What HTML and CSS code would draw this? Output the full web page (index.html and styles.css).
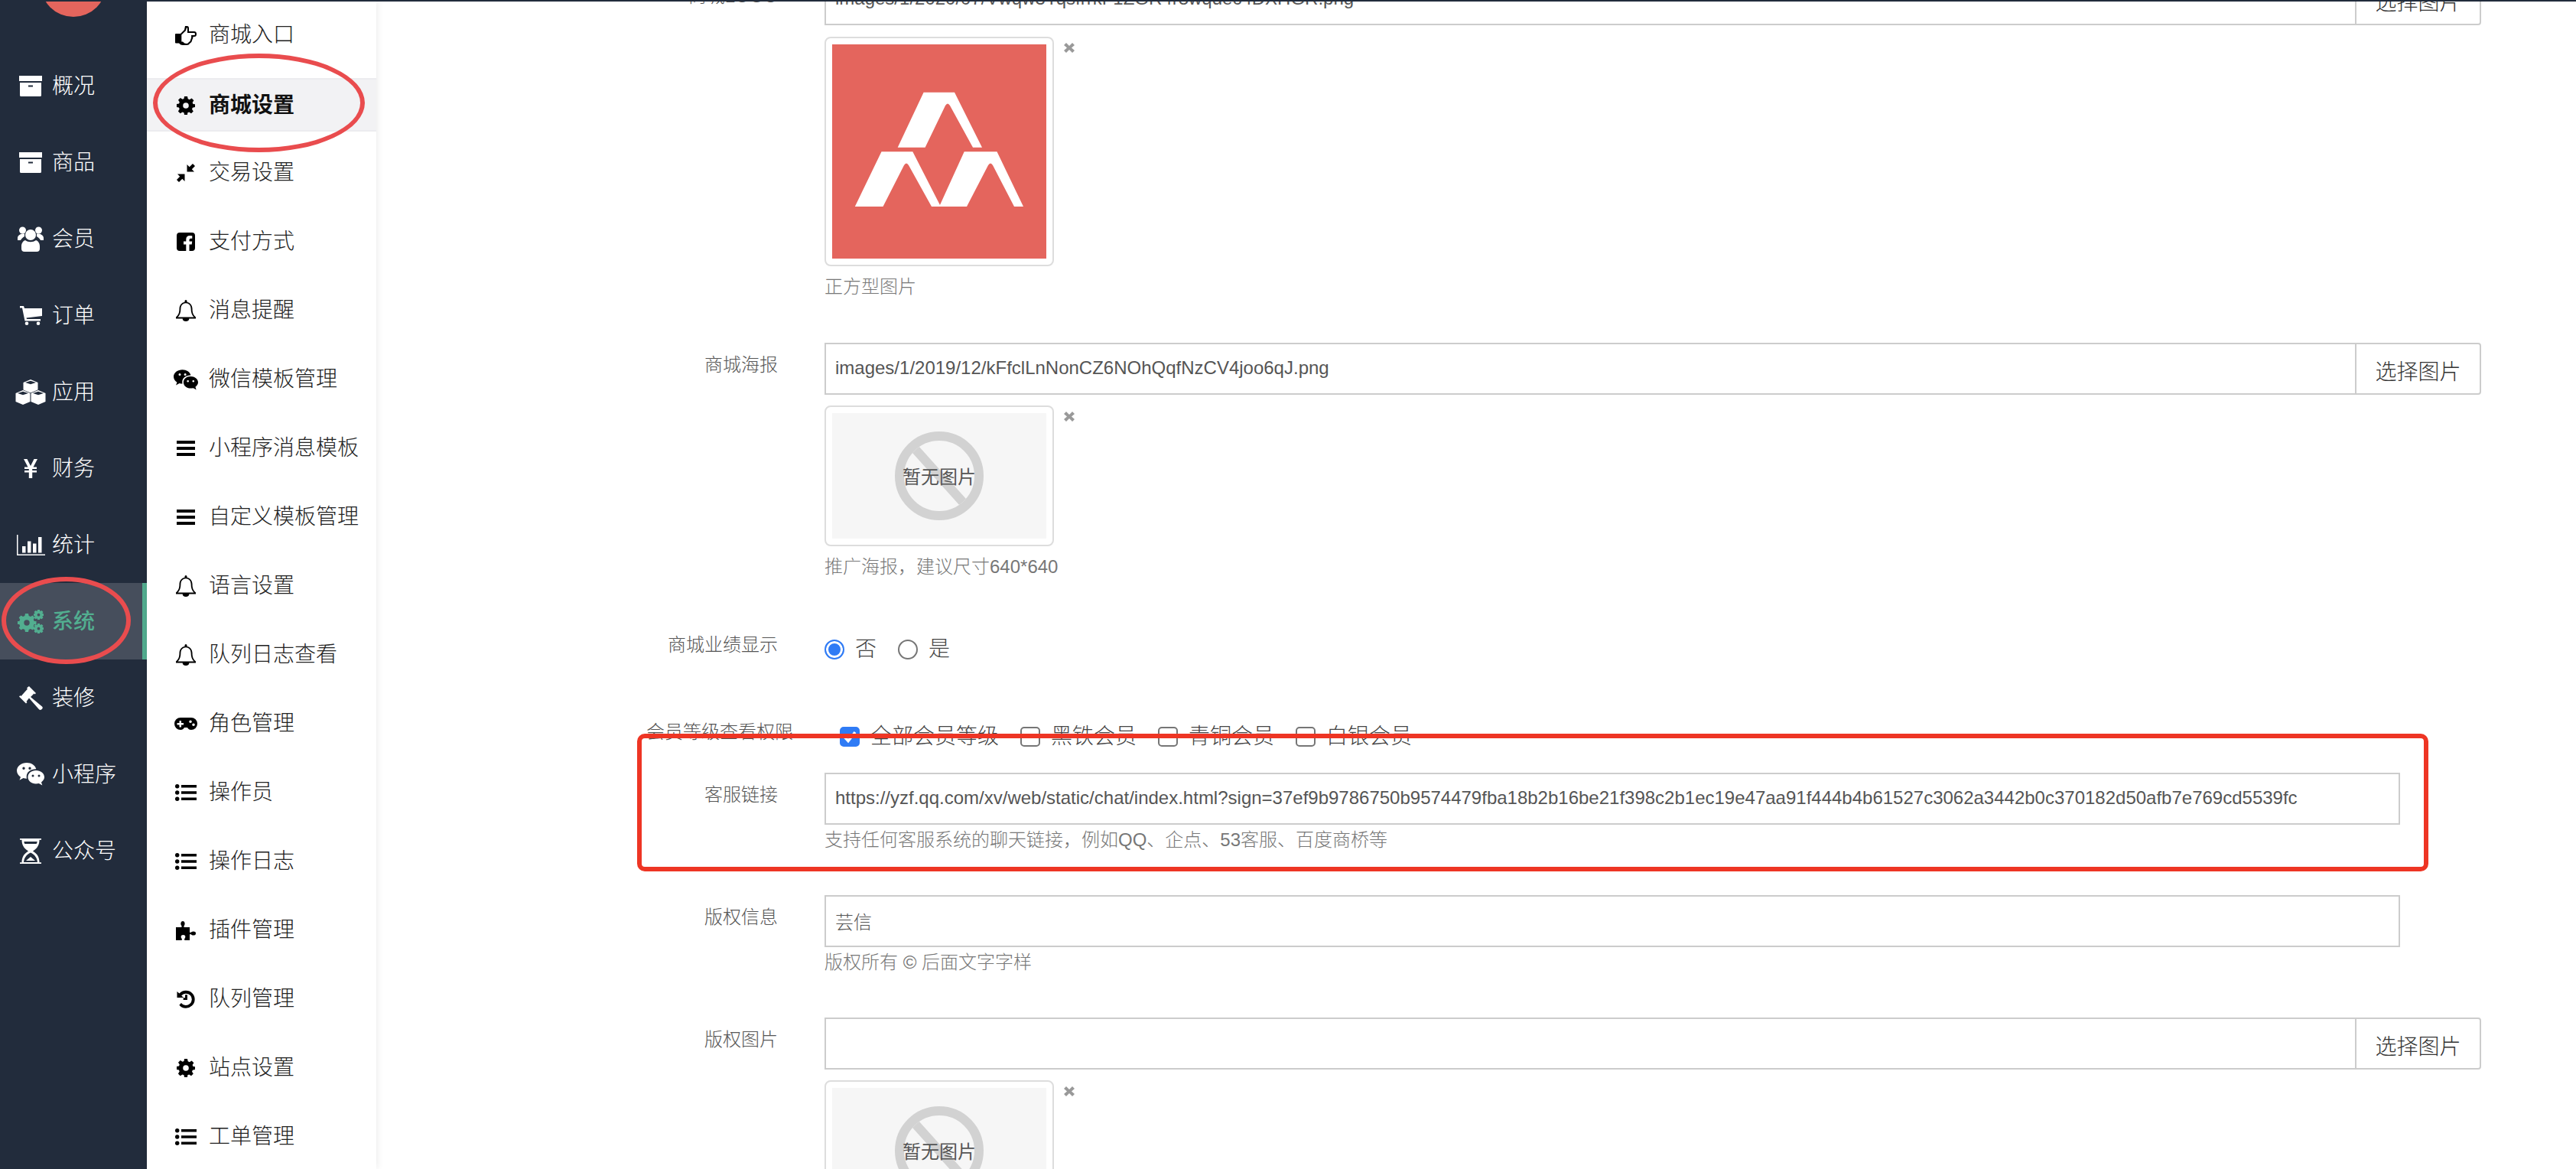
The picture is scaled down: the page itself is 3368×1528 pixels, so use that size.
FILE: index.html
```html
<!DOCTYPE html>
<html lang="zh-CN">
<head>
<meta charset="utf-8">
<title>商城设置</title>
<link rel="stylesheet" href="styles.css">
</head>
<body>
<svg class="sprite" xmlns="http://www.w3.org/2000/svg" aria-hidden="true">
  <symbol id="i-logo" viewBox="0 0 280 280"><path d="M119.6 62.7H160L196 134.7H184L154 80Q151 75 148 80L121.6 134.7H85.7Z"/><path d="M64.5 140.3H105.3L142 212H130L100 158Q97 153 94 158L66.5 212H29.8Z"/><path d="M172.7 140.3H215.5L250 212H238L210 158Q207 153 204 158L176 212H140Z"/></symbol>
  <symbol id="i-archive" viewBox="0 0 30 27"><path d="M0 0H30V7H0ZM1 9H29V25.5Q29 27 27.500 27H2.500Q1 27 1 25.5ZM12 12.500V14.500H18V12.500Z" fill-rule="evenodd"/></symbol>
  <symbol id="i-users" viewBox="0 0 34 33"><circle cx="17" cy="11" r="7"/><circle cx="6.500" cy="5" r="4.500"/><circle cx="27.500" cy="5" r="4.500"/><path d="M9 9.500C5 9 0 11 0 15V18H4C5 16 7 14 9 13ZM25 9.500C29 9 34 11 34 15V18H30C29 16 27 14 25 13ZM10 18C14 21 20 21 24 18C27 19 29 22 29 26V29Q29 33 25 33H9Q5 33 5 29V26C5 22 7 19 10 18Z"/></symbol>
  <symbol id="i-cart" viewBox="0 0 29 25"><path d="M0 0H5L6 3H29V13L8.500 15.500 9 17H27V19.500H6.500L3 2.500H0Z"/><circle cx="9" cy="22.700" r="2.300"/><circle cx="24" cy="22.700" r="2.300"/></symbol>
  <symbol id="i-cubes" viewBox="0 0 40 33"><path fill-rule="evenodd" d="M20 0L29.500 4V15L20 19 10.500 15V4ZM20 1.800L13 4 20 6.300 27 4Z"/><path fill-rule="evenodd" stroke="#222c3c" stroke-width="1.300" paint-order="stroke" d="M10 14L19.500 18V29L10 33 .5 29V18ZM10 15.800L3 18 10 20.300 17 18Z"/><path fill-rule="evenodd" stroke="#222c3c" stroke-width="1.300" paint-order="stroke" d="M30 14L39.500 18V29L30 33 20.500 29V18ZM30 15.800L23 18 30 20.300 37 18Z"/></symbol>
  <symbol id="i-yen" viewBox="0 0 18 25"><path d="M0 0H4.500L9 9 13.500 0H18L12.500 10.500H17V13H11.200V15H17V17.500H11.200V25H6.800V17.500H1V15H6.800V13H1V10.500H5.500Z"/></symbol>
  <symbol id="i-chart" viewBox="0 0 37 27"><path d="M0 0H1.500V25.500H37V27H0Z"/><path d="M7 15H11.500V23.500H7ZM14 8.500H18.500V23.500H14ZM21 11.500H25.500V23.500H21ZM28 3H32.500V23.500H28Z"/></symbol>
  <symbol id="i-cogs" viewBox="0 0 34 31"><path fill-rule="evenodd" d="M10 6H14L14.700 9 17 10 19.500 8.500 22.300 11.300 20.800 13.800 21.700 16H24.500V20H21.700L20.800 22.200 22.300 24.700 19.500 27.500 17 26 14.700 27 14 30H10L9.300 27 7 26 4.500 27.500 1.700 24.700 3.200 22.200 2.300 20H0V16H2.300L3.200 13.800 1.700 11.300 4.500 8.500 7 10 9.300 9ZM12 14.300A3.700 3.700 0 1 0 12 21.700 3.700 3.700 0 1 0 12 14.300Z" transform="translate(0 -1)"/><path fill-rule="evenodd" d="M26 0H29L29.400 2 31.500 1 33.500 3 32.200 4.700 34 5.300V8L32.200 8.500 33.500 10.300 31.500 12.300 29.400 11.200 29 13H26L25.600 11.200 23.500 12.300 21.500 10.300 22.800 8.500 21 8V5.300L22.800 4.700 21.500 3 23.500 1 25.600 2ZM27.500 4.800A1.900 1.900 0 1 0 27.500 8.600 1.900 1.900 0 1 0 27.500 4.800Z"/><path fill-rule="evenodd" d="M26 18H29L29.400 20 31.500 19 33.500 21 32.200 22.700 34 23.300V26L32.200 26.500 33.500 28.300 31.500 30.300 29.400 29.200 29 31H26L25.600 29.200 23.500 30.300 21.500 28.300 22.800 26.500 21 26V23.300L22.800 22.700 21.500 21 23.500 19 25.600 20ZM27.500 22.800A1.900 1.900 0 1 0 27.500 26.600 1.900 1.900 0 1 0 27.500 22.800Z"/></symbol>
  <symbol id="i-gavel" viewBox="0 0 31 31"><path d="M13 0L22 9 20.500 10.500 19.500 9.500 15 14 30 26.500Q31.500 28 30 29.800L29 30.600Q27.300 31.500 25.800 30L13 15.500 9.500 20 10.500 21 9 22.500 0 13.500 1.500 12 2.500 13 11 3.500 10 2.500 11.500 1Z"/></symbol>
  <symbol id="i-wechat" viewBox="0 0 36 30"><path fill-rule="evenodd" d="M13 0C19 0 24 3.200 25.300 8.300 18.500 8 12.500 12 12.700 18.500 12.700 19.300 12.800 20 13 20.700 11.500 20.700 10 20.400 8.500 20L3.500 22.800 5 18.700C2 16.500 0 14 0 10.300 0 4.400 6 0 13 0ZM9 5.500A1.700 1.700 0 1 0 9 8.900 1.700 1.700 0 1 0 9 5.500ZM17 5.500A1.700 1.700 0 1 0 17 8.900 1.700 1.700 0 1 0 17 5.500Z"/><path fill-rule="evenodd" d="M25 10C31 10 36 13.800 36 18.700 36 21.500 34.300 23.600 32 25.500L33.300 29.500 28.800 27C27.600 27.300 26.300 27.500 25 27.500 19 27.500 14.500 23.600 14.500 18.700S19 10 25 10ZM21 15.500A1.500 1.500 0 1 0 21 18.500 1.500 1.500 0 1 0 21 15.500ZM29 15.500A1.500 1.500 0 1 0 29 18.500 1.500 1.500 0 1 0 29 15.500Z"/></symbol>
  <symbol id="i-hourglass" viewBox="0 0 28 33"><path fill-rule="evenodd" d="M0 0H28V1.800H25.500C25.500 8 23 13 17 16.500 23 20 25.500 25 25.500 31.200H28V33H0V31.200H2.500C2.500 25 5 20 11 16.500 5 13 2.500 8 2.500 1.800H0ZM5.300 4C5.500 5.200 5.800 6 6.300 7H21.700C22.200 6 22.500 5.200 22.700 4ZM14 18.500C8.500 21 5.500 25.500 5 31H23C22.500 25.500 19.500 21 14 18.500Z"/><path d="M8 29L14 24 20 29Z"/></symbol>
  <symbol id="i-hand" viewBox="0 0 28 25"><path fill-rule="evenodd" d="M0 11Q0 10 1 10H7L12 5 13 0H15.500Q18 0 18 3V7H25Q28 7 28 10.500 28 14 25 14H23.500Q23.500 16 22.500 17.500 22 21 19.500 22.500 18 25 15 25H10Q7 25 5 22.500H1Q0 22.500 0 21.500ZM15 2.200L14 6 8.300 11.500V20.500H10Q12 23 15 23 17 23 18 21 20 20 20.500 17 21.500 15.500 21 12H25Q26 12 26 10.500 26 9 25 9H16V3.500Q16 2.200 15 2.200Z"/></symbol>
  <symbol id="i-cog" viewBox="0 0 24 24"><path fill-rule="evenodd" d="M10 0H14L14.700 3.300 16.800 4.200 19.600 2.400 22.400 5.200 20.600 8 21.500 10 24 10.300V14L20.800 14.700 20 16.700 21.800 19.500 19 22.300 16.200 20.500 14.300 21.300 14 24H10L9.500 21.200 7.500 20.400 4.700 22.200 1.900 19.400 3.700 16.600 2.900 14.600 0 14V10L3 9.500 3.800 7.500 2 4.800 4.800 2 7.600 3.800 9.500 3ZM12 8.200A3.800 3.800 0 1 0 12 15.800 3.800 3.800 0 1 0 12 8.200Z"/></symbol>
  <symbol id="i-compress" viewBox="0 0 24 24"><path d="M13.500 1V10.500H23L19.800 7.300 24 3 21 0 16.700 4.200ZM10.500 13.500V23L7.300 19.800 3 24 0 21 4.200 16.700 1 13.500Z"/></symbol>
  <symbol id="i-fb" viewBox="0 0 24 24"><path d="M4 0H20Q24 0 24 4V20Q24 24 20 24H16.500V15.500H19.700L20.200 11.500H16.500V9.500Q16.500 7.700 18.200 7.700H20.300V4.200Q19 4 17.400 4 12.300 4 12.300 9V11.500H9V15.500H12.300V24H4Q0 24 0 20V4Q0 0 4 0Z"/></symbol>
  <symbol id="i-bell" viewBox="0 0 26 28"><path fill-rule="evenodd" d="M13 0Q14.500 0 14.500 1.500V2.700C18.500 3.400 21.500 7 21.500 11.500 21.500 17 23 20 26 22.500V24.500H17.300A4.300 3.500 0 0 1 8.700 24.500H0V22.500C3 20 4.500 17 4.500 11.500 4.500 7 7.500 3.400 11.500 2.700V1.500Q11.500 0 13 0ZM13 4.300C9.200 4.300 6.400 7.400 6.400 11.500 6.400 16.500 5 20 2.500 22.500H23.500C21 20 19.600 16.500 19.600 11.500 19.600 7.400 16.800 4.300 13 4.300Z"/></symbol>
  <symbol id="i-bars" viewBox="0 0 24 20"><path d="M0 0H24V4H0ZM0 8H24V12H0ZM0 16H24V20H0Z"/></symbol>
  <symbol id="i-gamepad" viewBox="0 0 30 16"><path fill-rule="evenodd" d="M8 0H22A8 8 0 0 1 22 16C19 16 17.800 14 17 13H13C12.200 14 11 16 8 16A8 8 0 0 1 8 0ZM6.500 4V7H3.500V9.500H6.500V12.500H9V9.500H12V7H9V4ZM21 3.500A1.800 1.800 0 1 0 21 7.100 1.800 1.800 0 1 0 21 3.500ZM25 7.500A1.800 1.800 0 1 0 25 11.100 1.800 1.800 0 1 0 25 7.500Z"/></symbol>
  <symbol id="i-list" viewBox="0 0 28 22"><circle cx="2.700" cy="2.700" r="2.700"/><circle cx="2.700" cy="11" r="2.700"/><circle cx="2.700" cy="19.300" r="2.700"/><path d="M8 1H28V4.500H8ZM8 9.200H28V12.700H8ZM8 17.500H28V21H8Z"/></symbol>
  <symbol id="i-puzzle" viewBox="0 0 26 25"><path d="M0 8H6.500C8 8 8 6.800 7 5.500 5.700 3.500 6.500 0 9 0 11.500 0 12.300 3.500 11 5.500 10 6.800 10 8 11.500 8H18V14C18 15.200 19.300 15.300 20.300 14.300 22 12.800 26 13 26 16S22 19.200 20.300 17.700C19.300 16.700 18 16.800 18 18V25H12C10.800 25 10.700 23.800 11.500 22.800 13 21 12.700 18 9.500 18S6 21 7.500 22.800C8.300 23.800 8.200 25 7 25H0Z"/></symbol>
  <symbol id="i-history" viewBox="0 0 24 25"><path fill-rule="evenodd" d="M0 2L3.100 4.800A12 12 0 1 1 3 20.500L5.700 17.600A8 8 0 1 0 6 7.700L9 10.500H0ZM11 6.500H14V13.500H8.500V10.800H11Z"/></symbol>
  <symbol id="i-close" viewBox="0 0 14 13"><path d="M3 0L7 4 11 0 14 3 10 6.500 14 10 11 13 7 9 3 13 0 10 4 6.500 0 3Z"/></symbol>
</svg>

<div class="topline"></div>
<div class="app">
  <nav class="rail">
    <div class="rail-logo"><svg class="rail-logo-mark"><use href="#i-logo"/></svg></div>
    <a class="rail-item"><span class="rail-icon"><svg class="ic-archive"><use href="#i-archive"/></svg></span>概况</a>
    <a class="rail-item"><span class="rail-icon"><svg class="ic-archive"><use href="#i-archive"/></svg></span>商品</a>
    <a class="rail-item"><span class="rail-icon"><svg class="ic-users"><use href="#i-users"/></svg></span>会员</a>
    <a class="rail-item"><span class="rail-icon"><svg class="ic-cart"><use href="#i-cart"/></svg></span>订单</a>
    <a class="rail-item"><span class="rail-icon"><svg class="ic-cubes"><use href="#i-cubes"/></svg></span>应用</a>
    <a class="rail-item"><span class="rail-icon"><svg class="ic-yen"><use href="#i-yen"/></svg></span>财务</a>
    <a class="rail-item"><span class="rail-icon"><svg class="ic-chart"><use href="#i-chart"/></svg></span>统计</a>
    <a class="rail-item is-active"><span class="rail-icon"><svg class="ic-cogs"><use href="#i-cogs"/></svg></span>系统</a>
    <a class="rail-item"><span class="rail-icon"><svg class="ic-gavel"><use href="#i-gavel"/></svg></span>装修</a>
    <a class="rail-item"><span class="rail-icon"><svg class="ic-wechat"><use href="#i-wechat"/></svg></span>小程序</a>
    <a class="rail-item"><span class="rail-icon"><svg class="ic-hourglass"><use href="#i-hourglass"/></svg></span>公众号</a>
  </nav>

  <aside class="submenu">
    <a class="sub-item"><span class="sub-icon"><svg class="is-hand"><use href="#i-hand"/></svg></span>商城入口</a>
    <a class="sub-item is-active"><span class="sub-icon"><svg class="is-cog"><use href="#i-cog"/></svg></span>商城设置</a>
    <a class="sub-item"><span class="sub-icon"><svg class="is-cog"><use href="#i-compress"/></svg></span>交易设置</a>
    <a class="sub-item"><span class="sub-icon"><svg class="is-cog"><use href="#i-fb"/></svg></span>支付方式</a>
    <a class="sub-item"><span class="sub-icon"><svg class="is-bell"><use href="#i-bell"/></svg></span>消息提醒</a>
    <a class="sub-item"><span class="sub-icon"><svg class="is-wechat"><use href="#i-wechat"/></svg></span>微信模板管理</a>
    <a class="sub-item"><span class="sub-icon"><svg class="is-bars"><use href="#i-bars"/></svg></span>小程序消息模板</a>
    <a class="sub-item"><span class="sub-icon"><svg class="is-bars"><use href="#i-bars"/></svg></span>自定义模板管理</a>
    <a class="sub-item"><span class="sub-icon"><svg class="is-bell"><use href="#i-bell"/></svg></span>语言设置</a>
    <a class="sub-item"><span class="sub-icon"><svg class="is-bell"><use href="#i-bell"/></svg></span>队列日志查看</a>
    <a class="sub-item"><span class="sub-icon"><svg class="is-game"><use href="#i-gamepad"/></svg></span>角色管理</a>
    <a class="sub-item"><span class="sub-icon"><svg class="is-list"><use href="#i-list"/></svg></span>操作员</a>
    <a class="sub-item"><span class="sub-icon"><svg class="is-list"><use href="#i-list"/></svg></span>操作日志</a>
    <a class="sub-item"><span class="sub-icon"><svg class="is-puzzle"><use href="#i-puzzle"/></svg></span>插件管理</a>
    <a class="sub-item"><span class="sub-icon"><svg class="is-cog"><use href="#i-history"/></svg></span>队列管理</a>
    <a class="sub-item"><span class="sub-icon"><svg class="is-cog"><use href="#i-cog"/></svg></span>站点设置</a>
    <a class="sub-item"><span class="sub-icon"><svg class="is-list"><use href="#i-list"/></svg></span>工单管理</a>
  </aside>

  <main class="form">
    <section class="row row-logo">
      <div class="label">商城LOGO</div>
      <div class="field">
        <div class="group">
          <div class="input">images/1/2020/07/Vwqw3YqsfrrkF1ZGR4r8wqdec4DXHGR.png</div>
          <div class="addon">选择图片</div>
        </div>
        <div class="thumb-wrap">
          <div class="thumb"><svg class="logo-img"><use href="#i-logo"/></svg></div>
          <svg class="remove"><use href="#i-close"/></svg>
        </div>
        <p class="help help-thumb">正方型图片</p>
      </div>
    </section>

    <section class="row row-poster">
      <div class="label">商城海报</div>
      <div class="field">
        <div class="group">
          <div class="input">images/1/2019/12/kFfclLnNonCZ6NOhQqfNzCV4joo6qJ.png</div>
          <div class="addon">选择图片</div>
        </div>
        <div class="thumb-wrap">
          <div class="thumb">
            <div class="noimg"><span class="noimg-ring"></span><span class="noimg-text">暂无图片</span></div>
          </div>
          <svg class="remove"><use href="#i-close"/></svg>
        </div>
        <p class="help help-thumb">推广海报，建议尺寸640*640</p>
      </div>
    </section>

    <section class="row row-radio">
      <div class="label">商城业绩显示</div>
      <div class="options">
        <span class="radio is-on"></span><span class="opt-text">否</span>
        <span class="radio"></span><span class="opt-text">是</span>
      </div>
    </section>

    <section class="row row-check">
      <div class="label label-wide">会员等级查看权限</div>
      <div class="options checks">
        <span class="check is-on"><svg viewBox="0 0 22 22"><path d="M4 11L9 16.500 18 5" fill="none" stroke="#fff" stroke-width="3.500"/></svg></span><span class="opt-text">全部会员等级</span>
        <span class="check"></span><span class="opt-text">黑铁会员</span>
        <span class="check"></span><span class="opt-text">青铜会员</span>
        <span class="check"></span><span class="opt-text">白银会员</span>
      </div>
    </section>

    <section class="row row-link">
      <div class="label">客服链接</div>
      <div class="field">
        <div class="input input-full">https://yzf.qq.com/xv/web/static/chat/index.html?sign=37ef9b9786750b9574479fba18b2b16be21f398c2b1ec19e47aa91f444b4b61527c3062a3442b0c370182d50afb7e769cd5539fc</div>
        <p class="help help-input">支持任何客服系统的聊天链接，例如QQ、企点、53客服、百度商桥等</p>
      </div>
    </section>

    <section class="row row-copy">
      <div class="label">版权信息</div>
      <div class="field">
        <div class="input input-full">芸信</div>
        <p class="help help-input">版权所有 © 后面文字字样</p>
      </div>
    </section>

    <section class="row row-copyimg">
      <div class="label">版权图片</div>
      <div class="field">
        <div class="group">
          <div class="input"></div>
          <div class="addon">选择图片</div>
        </div>
        <div class="thumb-wrap">
          <div class="thumb">
            <div class="noimg"><span class="noimg-ring"></span><span class="noimg-text">暂无图片</span></div>
          </div>
          <svg class="remove"><use href="#i-close"/></svg>
        </div>
      </div>
    </section>
  </main>
</div>

<div class="mark mark-sub"></div>
<div class="mark mark-rail"></div>
<div class="mark-box"></div>
</body>
</html>
```

FILE: styles.css
```css
* { box-sizing: border-box; }
html, body { margin: 0; height: 100%; overflow: hidden; background: #fff; }
body { font-family: "Liberation Sans", "Noto Sans CJK SC", sans-serif; color: #555; position: relative; }
svg { display: block; fill: currentColor; }
.sprite { position: absolute; width: 0; height: 0; overflow: hidden; }

.topline { position: absolute; left: 0; top: 0; right: 0; height: 2px; background: #222c3c; z-index: 5; }

.app { display: flex; height: 1528px; overflow: hidden; }

/* primary rail */
.rail { flex: 0 0 192px; background: #222c3c; color: #fff; display: flex; flex-direction: column; }
.rail-logo { height: 62px; position: relative; }
.rail-logo::before { content: ""; position: absolute; left: 53px; top: -64px; width: 86px; height: 86px; border-radius: 50%; background: #e4655d; }
.rail-logo-mark { position: absolute; left: 53px; top: -64px; width: 86px; height: 86px; color: #fff; }
.rail-item { height: 100px; flex: none; display: flex; align-items: center; font-size: 28px; line-height: 1; padding-top: 2px; color: #fff; font-weight: 300; }
.rail-icon { flex: 0 0 68px; display: flex; justify-content: center; padding-left: 12px; margin-top: -2px; }
.rail-item.is-active { background: #464e5c; color: #52ae90; font-weight: 500; box-shadow: inset -6px 0 0 #52ae90; }

.ic-archive { width: 30px; height: 27px; }
.ic-users { width: 34px; height: 33px; }
.ic-cart { width: 29px; height: 25px; }
.ic-cubes { width: 40px; height: 33px; }
.ic-yen { width: 18px; height: 25px; }
.ic-chart { width: 37px; height: 27px; }
.ic-cogs { width: 34px; height: 31px; }
.ic-gavel { width: 31px; height: 31px; }
.ic-wechat { width: 36px; height: 30px; }
.ic-hourglass { width: 28px; height: 33px; }

/* secondary menu */
.submenu { flex: 0 0 300px; background: #fff; color: #222; padding-top: 12px; display: flex; flex-direction: column; gap: 20px; box-shadow: 0 0 10px rgba(0, 0, 0, .1); position: relative; z-index: 1; }
.sub-item { flex: none; height: 70px; display: flex; align-items: center; font-size: 28px; line-height: 1; font-weight: 300; padding-bottom: 2px; }
.sub-icon { flex: 0 0 81px; display: flex; justify-content: center; padding-left: 20px; color: #000; }
.sub-item.is-active { background: #f2f2f4; border-top: 2px solid #ececef; border-bottom: 2px solid #ececef; font-weight: 700; color: #111; padding-top: 2px; padding-bottom: 0; }

.is-hand { width: 28px; height: 25px; }
.is-cog { width: 24px; height: 24px; }
.is-bell { width: 26px; height: 28px; }
.is-wechat { width: 32px; height: 27px; }
.is-bars { width: 24px; height: 20px; }
.is-game { width: 30px; height: 16px; }
.is-list { width: 28px; height: 22px; }
.is-puzzle { width: 26px; height: 25px; }

/* form */
.form { flex: 1; padding: 0 124px 0 0; margin-top: -35px; min-width: 0; }
.row { display: flex; }
.row-logo { height: 483px; }
.row-poster { height: 388px; }
.row-radio { height: 114px; align-items: flex-start; }
.row-check { height: 60px; align-items: flex-start; }
.row-link { height: 160px; }
.row-copy { height: 160px; }

.label { flex: 0 0 525px; padding-top: 12px; font-size: 24px; line-height: 34px; color: #555; white-space: nowrap; display: flex; justify-content: flex-end; font-weight: 300; }
.row-logo .label { padding-top: 13px; }
.label-wide { margin-right: -20px; flex: 0 0 545px; }
.row-radio .label, .row-check .label { padding-top: 0; margin-top: -10px; }
.row-check .options { margin-left: 81px; }
.field { flex: 1; padding-left: 61px; min-width: 0; }
.row-radio .options { margin-left: 61px; }

.group { display: flex; height: 68px; }
.input { flex: 1; height: 68px; border: 2px solid #ccc; padding: 0 12px 2px; font-size: 24px; display: flex; align-items: center; color: #555; white-space: nowrap; overflow: hidden; font-weight: 300; }
.input-full { width: 2060px; flex: none; }
.addon { flex: 0 0 163px; border: 2px solid #ccc; border-left: 0; border-radius: 0 4px 4px 0; display: flex; align-items: center; justify-content: center; font-size: 28px; color: #333; font-weight: 300; padding-top: 4px; }

.thumb-wrap { position: relative; margin-top: 14px; width: 300px; }
.thumb { width: 300px; padding: 8px; border: 2px solid #ddd; border-radius: 8px; background: #fff; }
.logo-img { width: 280px; height: 280px; background: #e4655d; color: #fff; }
.remove { position: absolute; left: 313px; top: 8px; width: 14px; height: 13px; color: #999; }
.row-logo .thumb-wrap { margin-top: 15px; }

.noimg { height: 164px; background: #f6f6f6; position: relative; display: flex; align-items: center; justify-content: center; }
.noimg-ring { width: 116px; height: 116px; border-radius: 50%; border: 12px solid #d2d2d2; position: relative; overflow: hidden; }
.noimg-ring::after { content: ""; position: absolute; left: -5px; right: -5px; top: 40px; height: 12px; background: #d2d2d2; transform: rotate(48deg); }
.noimg-text { position: absolute; left: 0; right: 0; top: 0; bottom: 0; display: flex; align-items: center; justify-content: center; font-size: 24px; color: #555; padding-bottom: 2px; }

.help { margin: 0; font-size: 24px; line-height: 34px; color: #777; white-space: nowrap; font-weight: 300; }
.help-thumb { margin-top: 10px; }
.help-input { margin-top: 3px; }

.options { display: flex; align-items: center; height: 26px; }
.radio { flex: none; width: 26px; height: 26px; border-radius: 50%; border: 2px solid #767676; background: #fff; }
.radio.is-on { border-color: #2f7bf5; background: #2f7bf5; box-shadow: inset 0 0 0 3px #fff; }
.opt-text { font-size: 28px; line-height: 26px; color: #444; margin-left: 14px; margin-right: 28px; font-weight: 300; }
.check { flex: none; width: 26px; height: 26px; border-radius: 5px; border: 2px solid #767676; background: #fff; }
.check svg { width: 22px; height: 22px; }
.check.is-on { background: #2f7bf5; border-color: #2f7bf5; }

/* annotations */
.mark { position: absolute; border: 6px solid #e94c4e; border-radius: 50%; z-index: 6; pointer-events: none; }
.mark-sub { left: 200px; top: 70px; width: 277px; height: 129px; }
.mark-rail { left: 2px; top: 754px; width: 169px; height: 114px; }
.mark-box { position: absolute; left: 833px; top: 959px; width: 2342px; height: 180px; border: 6px solid #ee3524; border-radius: 10px; z-index: 6; pointer-events: none; }
```
